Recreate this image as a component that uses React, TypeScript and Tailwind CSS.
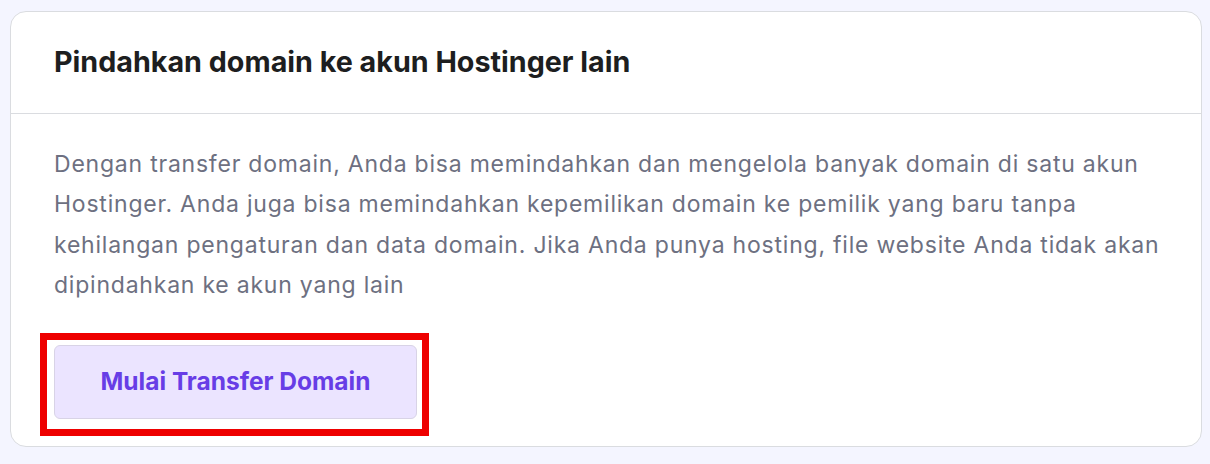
import React from "react";

export default function App() {
  return (
    <div className="w-[1210px] h-[464px] bg-[#f4f5ff] pt-[11px] pl-[10px] pr-[8px] font-['Inter',sans-serif]">
      <div className="h-[436px] bg-white border border-[#dadce0] rounded-[16px] flex flex-col overflow-hidden">
        <div className="h-[102px] shrink-0 border-b border-[#dadce0] flex items-center px-[43px]">
          <h2 className="text-[28.7px] font-bold text-[#1d1e20] leading-none">
            Pindahkan domain ke akun Hostinger lain
          </h2>
        </div>
        <div className="px-[43px] pt-[30px]">
          <p className="text-[23px] leading-[40.4px] tracking-[0.78px] text-[#6d7081] whitespace-nowrap">
            Dengan transfer domain, Anda bisa memindahkan dan mengelola banyak domain di satu akun<br />
            Hostinger. Anda juga bisa memindahkan kepemilikan domain ke pemilik yang baru tanpa<br />
            kehilangan pengaturan dan data domain. Jika Anda punya hosting, file website Anda tidak akan<br />
            dipindahkan ke akun yang lain
          </p>
          <div className="mt-[39px] relative inline-block">
            <button className="w-[363px] h-[74px] rounded-[6px] bg-[#ebe4ff] border border-[#d8d3e6] text-[#673de6] text-[24.5px] font-bold">
              Mulai Transfer Domain
            </button>
            <div className="absolute left-[-14px] top-[-12px] w-[389px] h-[103px] border-[7px] border-[#ee0000] pointer-events-none" />
          </div>
        </div>
      </div>
    </div>
  );
}
